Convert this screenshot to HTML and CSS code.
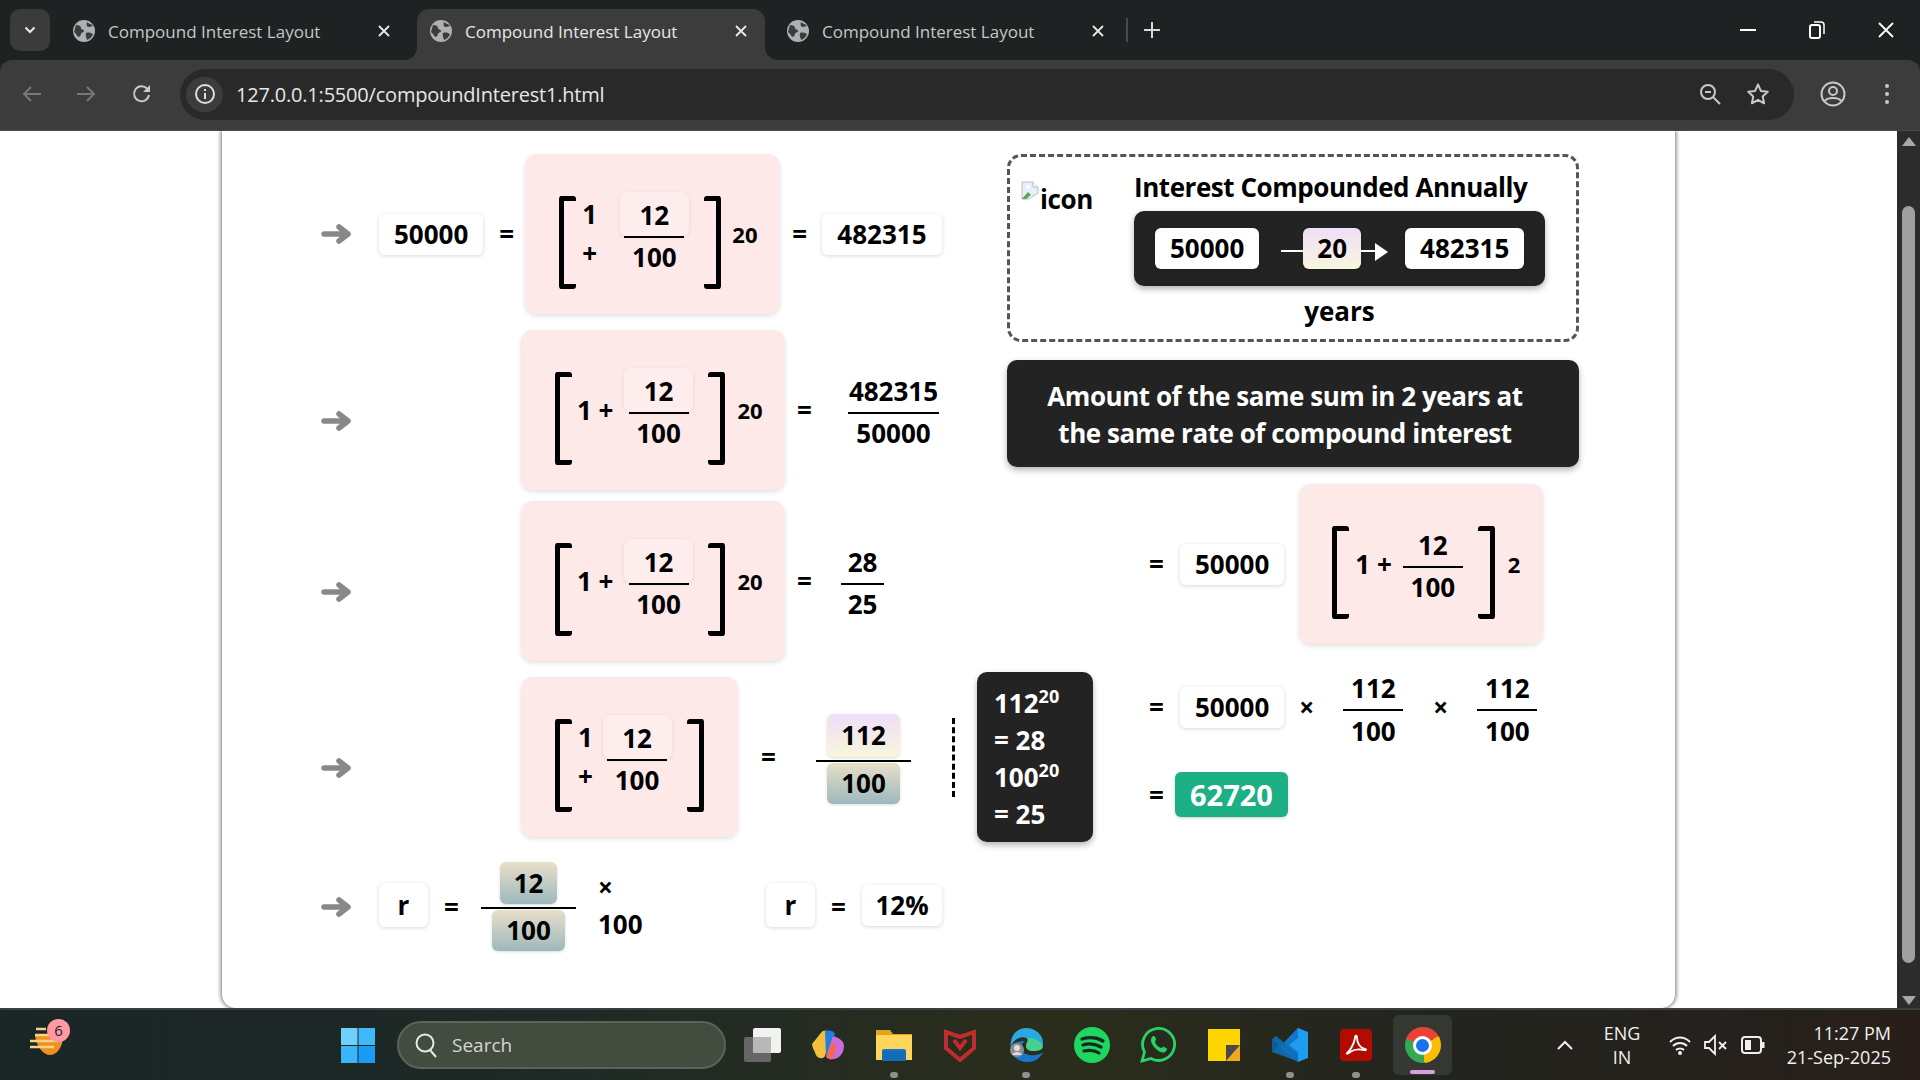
FILE: index.html
```html
<!DOCTYPE html>
<html lang="en">

<head>
    <meta charset="UTF-8">
    <meta name="viewport" content="width=device-width, initial-scale=1.0">
    <title>Compound Interest Layout</title>
    <link rel="stylesheet" href="styles.css">
</head>

<body>
    <svg class="defs" width="0" height="0">
        <symbol id="globe" viewBox="0 0 22 22">
            <circle cx="11" cy="11" r="11" fill="#aeb0b3"/>
            <path d="M3 5c3 0 5 1 5 3s3 1 3 3-3 1-3 3-2 3-3 3c-1-2-2-3-4-5zM14 2c1 2 4 1 6 4l-4 1c-2 0-3-2-2-5zM13 13c3-1 5 0 7 1-1 3-3 5-6 6 0-2-2-4-1-7z" fill="#3c3c3c"/>
        </symbol>
        <symbol id="close" viewBox="0 0 14 14">
            <path d="M2 2l10 10M12 2L2 12" stroke="currentColor" stroke-width="1.8" fill="none"/>
        </symbol>
        <symbol id="arrow" viewBox="0 0 31 20">
            <path d="M3 10H27M18 3l9 7-9 7" stroke="#888" stroke-width="5.500" stroke-linecap="round" stroke-linejoin="round" fill="none"/>
        </symbol>
    </svg>

    <!-- tabs -->
    <div class="tabstrip">
        <div class="tab-menu">
            <svg width="12" height="8" viewBox="0 0 12 8"><path d="M1.500 1.500L6 6l4.500-4.500" stroke="#e8e8e8" stroke-width="2" fill="none"/></svg>
        </div>
        <div class="tab">
            <svg class="tab-globe"><use href="#globe"/></svg>
            <span class="tab-title">Compound Interest Layout</span>
            <svg class="tab-close"><use href="#close"/></svg>
        </div>
        <div class="tab tab-active">
            <svg class="tab-globe"><use href="#globe"/></svg>
            <span class="tab-title">Compound Interest Layout</span>
            <svg class="tab-close"><use href="#close"/></svg>
        </div>
        <div class="tab">
            <svg class="tab-globe"><use href="#globe"/></svg>
            <span class="tab-title">Compound Interest Layout</span>
            <svg class="tab-close"><use href="#close"/></svg>
        </div>
        <div class="tab-sep"></div>
        <svg class="tab-plus" width="18" height="18" viewBox="0 0 18 18"><path d="M9 1v16M1 9h16" stroke="#d8d8d8" stroke-width="2"/></svg>
        <div class="win-controls">
            <div class="win-btn"><svg width="16" height="2" viewBox="0 0 16 2"><path d="M0 1h16" stroke="#fff" stroke-width="2"/></svg></div>
            <div class="win-btn"><svg width="16" height="18" viewBox="0 0 16 18"><rect x="1" y="4" width="10" height="13" rx="2" stroke="#fff" stroke-width="2" fill="none"/><path d="M5 1h7a3 3 0 0 1 3 3v9" stroke="#fff" stroke-width="1.500" fill="none"/></svg></div>
            <div class="win-btn"><svg width="16" height="16" viewBox="0 0 16 16"><path d="M1 1l14 14M15 1L1 15" stroke="#fff" stroke-width="1.800"/></svg></div>
        </div>
    </div>

    <!-- toolbar -->
    <div class="toolbar">
        <div class="tool-btn"><svg width="20" height="20" viewBox="0 0 20 20"><path d="M19 10H2M9 3l-7 7 7 7" stroke="#777" stroke-width="2" fill="none"/></svg></div>
        <div class="tool-btn"><svg width="20" height="20" viewBox="0 0 20 20"><path d="M1 10h17M11 3l7 7-7 7" stroke="#777" stroke-width="2" fill="none"/></svg></div>
        <div class="tool-btn tool-reload"><svg width="22" height="22" viewBox="0 0 22 22"><path d="M18 12a7.500 7.500 0 1 1-2-6.500L18 8" stroke="#c8c8c8" stroke-width="2" fill="none"/><path d="M19 2v7h-7z" fill="#c8c8c8"/></svg></div>
        <div class="omnibox">
            <div class="site-chip"><svg width="22" height="22" viewBox="0 0 22 22"><circle cx="11" cy="11" r="9" stroke="#e0e0e0" stroke-width="2" fill="none"/><path d="M11 10v6M11 6v2" stroke="#e0e0e0" stroke-width="2"/></svg></div>
            <span class="url">127.0.0.1:5500/compoundInterest1.html</span>
            <div class="omni-icons">
                <svg width="24" height="24" viewBox="0 0 24 24"><circle cx="10" cy="10" r="7" stroke="#c8c8c8" stroke-width="2" fill="none"/><path d="M15 15l7 7M7 10h6" stroke="#c8c8c8" stroke-width="2"/></svg>
                <svg width="24" height="24" viewBox="0 0 24 24"><path d="M12 2.500l2.900 6.400 6.900.8-5.100 4.700 1.400 6.900-6.100-3.500-6.100 3.500 1.400-6.900-5.100-4.700 6.900-.8z" stroke="#c8c8c8" stroke-width="2" stroke-linejoin="round" fill="none"/></svg>
            </div>
        </div>
        <div class="tool-btn tool-profile"><svg width="26" height="26" viewBox="0 0 26 26"><circle cx="13" cy="13" r="11.500" stroke="#c8c8c8" stroke-width="2" fill="none"/><circle cx="13" cy="10" r="4" stroke="#c8c8c8" stroke-width="2" fill="none"/><path d="M5 20c2-4 14-4 16 0" stroke="#c8c8c8" stroke-width="2" fill="none"/></svg></div>
        <div class="tool-btn"><svg width="4" height="20" viewBox="0 0 4 20"><circle cx="2" cy="2" r="2" fill="#c8c8c8"/><circle cx="2" cy="10" r="2" fill="#c8c8c8"/><circle cx="2" cy="18" r="2" fill="#c8c8c8"/></svg></div>
    </div>

    <!-- page -->
    <div class="viewport">
        <div class="page">
            <div class="card">
                <div class="col-left">

                    <div class="row row-1">
                        <svg class="arrow"><use href="#arrow"/></svg>
                        <div class="box ml-29">50000</div>
                        <div class="eq ml-16">=</div>
                        <div class="pink pink-a ml-12">
                            <div class="bracket"></div>
                            <div class="one-plus one-wrap">1 +</div>
                            <div class="frac ml-18">
                                <div class="num num-box">12</div>
                                <div class="frac-line"></div>
                                <div class="den">100</div>
                            </div>
                            <div class="bracket bracket-r ml-20"></div>
                            <div class="exp ml-11">20</div>
                        </div>
                        <div class="eq ml-12">=</div>
                        <div class="box ml-16">482315</div>
                    </div>

                    <div class="row row-2">
                        <svg class="arrow arrow-low"><use href="#arrow"/></svg>
                        <div class="pink pink-b ml-171">
                            <div class="bracket"></div>
                            <div class="one-plus one-tight">1 +</div>
                            <div class="frac ml-15">
                                <div class="num num-box">12</div>
                                <div class="frac-line"></div>
                                <div class="den">100</div>
                            </div>
                            <div class="bracket bracket-r ml-19"></div>
                            <div class="exp ml-13">20</div>
                        </div>
                        <div class="eq ml-12">=</div>
                        <div class="frac frac-wide ml-37">
                            <div class="num">482315</div>
                            <div class="frac-line"></div>
                            <div class="den">50000</div>
                        </div>
                    </div>

                    <div class="row row-3">
                        <svg class="arrow arrow-low"><use href="#arrow"/></svg>
                        <div class="pink pink-b ml-171">
                            <div class="bracket"></div>
                            <div class="one-plus one-tight">1 +</div>
                            <div class="frac ml-15">
                                <div class="num num-box">12</div>
                                <div class="frac-line"></div>
                                <div class="den">100</div>
                            </div>
                            <div class="bracket bracket-r ml-19"></div>
                            <div class="exp ml-13">20</div>
                        </div>
                        <div class="eq ml-12">=</div>
                        <div class="frac frac-small ml-30">
                            <div class="num">28</div>
                            <div class="frac-line"></div>
                            <div class="den">25</div>
                        </div>
                    </div>

                    <div class="row row-4">
                        <svg class="arrow arrow-low"><use href="#arrow"/></svg>
                        <div class="pink pink-c ml-171">
                            <div class="bracket"></div>
                            <div class="one-plus one-wrap">1 +</div>
                            <div class="frac ml-5">
                                <div class="num num-box">12</div>
                                <div class="frac-line"></div>
                                <div class="den">100</div>
                            </div>
                            <div class="bracket bracket-r ml-20"></div>
                        </div>
                        <div class="eq ml-23">=</div>
                        <div class="frac frac-grad frac-low ml-41">
                            <div class="grad grad-light">112</div>
                            <div class="frac-line"></div>
                            <div class="grad grad-dark">100</div>
                        </div>
                        <div class="dash-line"></div>
                        <div class="dark-note">
                            <div>112<sup>20</sup></div>
                            <div>= 28</div>
                            <div>100<sup>20</sup></div>
                            <div>= 25</div>
                        </div>
                    </div>

                    <div class="row row-5">
                        <svg class="arrow"><use href="#arrow"/></svg>
                        <div class="box box-tall box-r ml-29">r</div>
                        <div class="eq ml-16">=</div>
                        <div class="frac frac-grad ml-23">
                            <div class="grad grad-dark grad-num">12</div>
                            <div class="frac-line"></div>
                            <div class="grad grad-dark">100</div>
                        </div>
                        <div class="times-wrap">× 100</div>
                        <div class="box box-tall box-r ml-118">r</div>
                        <div class="eq ml-16">=</div>
                        <div class="box box-pct ml-17">12%</div>
                    </div>

                </div>

                <div class="col-right">
                    <div class="dashed">
                        <div class="icon-alt">
                            <svg width="19" height="19" viewBox="0 0 19 19"><path d="M1 1h11l5 5v6L8 18H1z" fill="#e8eefc" stroke="#b9bcc4"/><path d="M12 1v5h5" fill="#fff" stroke="#b9bcc4"/><path d="M1 18l6-7 3 3-5 4z" fill="#57a845"/><circle cx="7" cy="6" r="2" fill="#fff"/></svg><span>icon</span>
                        </div>
                        <div class="dashed-main">
                            <div class="dashed-title">Interest Compounded Annually</div>
                            <div class="flow">
                                <div class="box">50000</div>
                                <div class="seg seg-a"></div>
                                <div class="box box-years">20</div>
                                <div class="seg seg-b"></div>
                                <div class="tri"></div>
                                <div class="box ml-17">482315</div>
                            </div>
                            <div class="years">years</div>
                        </div>
                    </div>

                    <div class="banner">Amount of the same sum in 2 years at<br>the same rate of compound interest</div>

                    <div class="row row-a">
                        <div class="eq ml-142">=</div>
                        <div class="box ml-17">50000</div>
                        <div class="pink pink-d ml-15">
                            <div class="bracket"></div>
                            <div class="one-plus">1 +</div>
                            <div class="frac ml-11">
                                <div class="num">12</div>
                                <div class="frac-line"></div>
                                <div class="den">100</div>
                            </div>
                            <div class="bracket bracket-r ml-15"></div>
                            <div class="exp ml-13">2</div>
                        </div>
                    </div>

                    <div class="row row-b">
                        <div class="eq ml-142">=</div>
                        <div class="box ml-17">50000</div>
                        <div class="times ml-15">×</div>
                        <div class="frac ml-30">
                            <div class="num">112</div>
                            <div class="frac-line"></div>
                            <div class="den">100</div>
                        </div>
                        <div class="times ml-30">×</div>
                        <div class="frac ml-30">
                            <div class="num">112</div>
                            <div class="frac-line"></div>
                            <div class="den">100</div>
                        </div>
                    </div>

                    <div class="row row-c">
                        <div class="eq ml-142">=</div>
                        <div class="answer">62720</div>
                    </div>
                </div>
            </div>
        </div>

        <div class="scrollbar">
            <div class="scroll-up"></div>
            <div class="scroll-thumb"></div>
            <div class="scroll-down"></div>
        </div>
    </div>

    <!-- taskbar -->
    <div class="taskbar">
        <div class="widget">
            <svg width="36" height="32" viewBox="0 0 36 32"><path d="M6 12h28c0 12-7 19-13 19S8 24 6 12z" fill="#f0901e"/><path d="M1 17h28M1 23h24M6 11h26M7 5h10" stroke="#f3d58a" stroke-width="2.500"/></svg>
            <span class="badge">6</span>
        </div>
        <div class="task-slot task-first">
            <svg width="34" height="35" viewBox="0 0 34 35"><rect width="16.500" height="17" fill="#6fd0fb"/><rect x="17.500" width="16.500" height="17" fill="#3fbaf9"/><rect y="18" width="16.500" height="17" fill="#3cb4f8"/><rect x="17.500" y="18" width="16.500" height="17" fill="#1a9cf5"/></svg>
        </div>
        <div class="search">
            <svg width="24" height="26" viewBox="0 0 24 26"><circle cx="11" cy="11" r="8.500" stroke="#e8e8e8" stroke-width="2" fill="none"/><path d="M16 18l6 7" stroke="#e8e8e8" stroke-width="2"/></svg>
            <span>Search</span>
        </div>
        <div class="task-slot">
            <svg width="37" height="34" viewBox="0 0 37 34"><rect y="9" width="27" height="25" rx="2" fill="#666"/><rect x="9" width="28" height="25" rx="2" fill="#f2f2f2"/><rect x="9" y="9" width="18" height="16" fill="#b8b8b8"/></svg>
        </div>
        <div class="task-slot">
            <svg width="34" height="30" viewBox="0 0 34 30"><path d="M9 4c2-4 6-4 8-3l4 1-7 24c-2 4-8 2-9-1C3 20 1 17 1 14z" fill="#ffc83d" opacity=".95"/><path d="M14 1c3-1 9-1 10 3l-9 22z" fill="#1f7fe0"/><path d="M22 6c4 1 11 4 11 10 0 8-6 13-10 13-3 1-6 0-8-2z" fill="#c86de0"/><path d="M15 27l5-15 6 3-4 14z" fill="#f2695c"/></svg>
        </div>
        <div class="task-slot">
            <svg width="36" height="32" viewBox="0 0 36 32"><path d="M0 1h14l3 4h19v26H0z" fill="#e0a51c"/><path d="M0 6h36v25H0z" fill="#ffd65c"/><rect x="6" y="20" width="24" height="12" rx="2" fill="#1a78c8"/><rect x="6" y="22" width="24" height="10" fill="#0f64b0" opacity=".6"/></svg>
            <span class="task-dot"></span>
        </div>
        <div class="task-slot">
            <svg width="32" height="34" viewBox="0 0 32 34"><path d="M2 4l14 5 14-5v16L16 32 2 20z" stroke="#c12c2c" stroke-width="4" fill="none"/><path d="M10 12l6 8 6-8" stroke="#c12c2c" stroke-width="4" fill="none"/></svg>
        </div>
        <div class="task-slot">
            <svg width="36" height="36" viewBox="0 0 36 36"><path d="M18 1c10 0 17 7 17 15 0 5-4 8-9 8-5 0-8-2-8-5 0-2 2-2 2-5s-4-5-9-3C6 13 3 17 3 22 1 10 8 1 18 1z" fill="#2aa8e0"/><path d="M3 22c1 8 8 13 16 13 7 0 13-3 16-10-5 4-12 4-17 2-6-2-6-9-1-13-8 0-14 2-14 8z" fill="#1877c9"/><path d="M20 11c6 0 14 3 15 9-1 3-5 4-9 4-5 0-8-2-8-5 0-3 2-5 2-8z" fill="#47d18c"/><circle cx="9" cy="23" r="7" fill="#8d8d8d"/><circle cx="9" cy="21" r="3" fill="#ddd"/><path d="M4 28c2-4 8-4 10 0z" fill="#ddd"/></svg>
            <span class="task-dot"></span>
        </div>
        <div class="task-slot">
            <svg width="36" height="36" viewBox="0 0 36 36"><circle cx="18" cy="18" r="18" fill="#1ed760"/><path d="M8 12c7-2 14-2 21 2M9 18c6-2 12-1 18 2M10 24c5-1 10-1 15 2" stroke="#16291d" stroke-width="3.200" stroke-linecap="round" fill="none"/></svg>
        </div>
        <div class="task-slot">
            <svg width="36" height="36" viewBox="0 0 36 36"><path d="M2 34l2.500-9A16 16 0 1 1 11 31.500z" stroke="#25d366" stroke-width="2.800" fill="none"/><path d="M12 10c2-2 3-1 4 2 .5 1-1 2-1 3 1 3 3 5 6 6 1 0 2-2 3-1 3 1 4 2 2 4-2 3-7 1-10-2s-7-8-4-12z" fill="#25d366"/></svg>
        </div>
        <div class="task-slot">
            <svg width="32" height="32" viewBox="0 0 32 32"><path d="M0 0h32v32H0z" fill="#ffd500"/><path d="M18 32l14-16v16z" fill="#f0a81c"/><path d="M18 32V16h14z" fill="#4a4a4a"/></svg>
        </div>
        <div class="task-slot">
            <svg width="36" height="36" viewBox="0 0 36 36"><path d="M26 1l10 4v26l-10 4L8 20z" fill="#1f9cf0"/><path d="M26 1L10 18l16 17V25L17 18l9-7z" fill="#0f78c8"/><path d="M0 12l4-3 22 18v8l-4-2L0 25l5-7z" fill="#0e6fb8" opacity=".9"/><path d="M0 25V12l7 6z" fill="#0a5c9c"/></svg>
            <span class="task-dot"></span>
        </div>
        <div class="task-slot">
            <svg width="32" height="32" viewBox="0 0 32 32"><rect width="32" height="32" rx="4" fill="#b30b00"/><path d="M7 24c3-2 7-9 8-15 0-3 2-3 2 0 0 5 3 10 8 11 2 0 1 2-1 1-5-1-11 0-14 2-2 2-4 2-3 1z" stroke="#fff" stroke-width="1.800" fill="none"/></svg>
            <span class="task-dot"></span>
        </div>
        <div class="task-slot task-active">
            <div class="chrome-logo"><span></span></div>
            <span class="task-indicator"></span>
        </div>

        <div class="tray">
            <svg class="tray-chev" width="16" height="10" viewBox="0 0 16 10"><path d="M1 9l7-7 7 7" stroke="#f0f0f0" stroke-width="2" fill="none"/></svg>
            <div class="lang">ENG<br>IN</div>
            <svg class="tray-wifi" width="24" height="22" viewBox="0 0 24 22"><path d="M2 8c6-6 14-6 20 0M5 12c4-4 10-4 14 0M8 16c2-2 6-2 8 0" stroke="#f0f0f0" stroke-width="2" fill="none"/><circle cx="12" cy="19" r="2" fill="#f0f0f0"/></svg>
            <svg class="tray-sound" width="24" height="22" viewBox="0 0 24 22"><path d="M1 8h4l6-6v18l-6-6H1z" stroke="#f0f0f0" stroke-width="1.800" fill="none"/><path d="M15 8l7 7M22 8l-7 7" stroke="#f0f0f0" stroke-width="1.800"/></svg>
            <svg class="tray-batt" width="24" height="20" viewBox="0 0 24 20"><rect x="1" y="2" width="19" height="16" rx="3" stroke="#f0f0f0" stroke-width="2" fill="none"/><rect x="4" y="5" width="6" height="10" fill="#f0f0f0"/><rect x="21" y="7" width="2.500" height="6" fill="#f0f0f0"/></svg>
            <div class="clock">11:27 PM<br>21-Sep-2025</div>
        </div>
    </div>
</body>

</html>
```

FILE: styles.css
```css
* {
    box-sizing: border-box;
}

html,
body {
    margin: 0;
    height: 1080px;
    overflow: hidden;
}

body {
    font-family: "Open Sans", "Liberation Sans", sans-serif;
    background-color: #1f2222;
}

.defs {
    display: block;
    height: 0;
}

/* tabs */
.tabstrip {
    display: flex;
    align-items: flex-end;
    height: 60px;
    padding-left: 10px;
    background-color: #1f2222;
}

.tab-menu {
    display: flex;
    align-items: center;
    justify-content: center;
    width: 40px;
    height: 42px;
    margin-bottom: 9px;
    border-radius: 10px;
    background-color: #3b3b3b;
}

.tab {
    position: relative;
    display: flex;
    align-items: center;
    width: 348px;
    height: 51px;
    margin-left: 10px;
    padding: 0 14px 7px 13px;
    border-radius: 12px 12px 0 0;
    color: #c6c6c6;
}

.tab + .tab {
    margin-left: 9px;
}

.tab-active {
    background-color: #3c3c3c;
    color: #e6e6e6;
}

.tab-active::before,
.tab-active::after {
    content: "";
    position: absolute;
    bottom: 0;
    width: 12px;
    height: 12px;
}

.tab-active::before {
    left: -12px;
    background: radial-gradient(circle at 0 0, transparent 11.500px, #3c3c3c 12px);
}

.tab-active::after {
    right: -12px;
    background: radial-gradient(circle at 100% 0, transparent 11.500px, #3c3c3c 12px);
}

.tab-globe {
    width: 22px;
    height: 22px;
    flex-shrink: 0;
}

.tab-title {
    flex: 1;
    margin-left: 13px;
    font-size: 17px;
    white-space: nowrap;
}

.tab-close {
    width: 14px;
    height: 14px;
    margin-right: 3px;
    color: #e8e8e8;
}

.tab-sep {
    width: 2px;
    height: 24px;
    margin: 0 0 18px 4px;
    background-color: #4a4a4a;
}

.tab-plus {
    margin: 0 0 21px 15px;
}

.win-controls {
    display: flex;
    margin-left: auto;
    height: 60px;
}

.win-btn {
    display: flex;
    align-items: center;
    justify-content: center;
    width: 69px;
}

/* toolbar */
.toolbar {
    display: flex;
    align-items: center;
    height: 71px;
    padding: 0 0 2px 5px;
    border-radius: 12px 12px 0 0;
    border-bottom: 1px solid #4c4c4c;
    background-color: #3c3c3c;
}

.tool-btn {
    display: flex;
    align-items: center;
    justify-content: center;
    width: 54px;
    height: 40px;
}

.tool-reload {
    margin-left: 2px;
}

.omnibox {
    display: flex;
    align-items: center;
    width: 1614px;
    height: 51px;
    margin-left: 11px;
    padding-left: 6px;
    border-radius: 26px;
    background-color: #292929;
}

.site-chip {
    display: flex;
    align-items: center;
    justify-content: center;
    width: 37px;
    height: 35px;
    border-radius: 18px;
    background-color: #3c3c3c;
}

.url {
    margin-left: 13px;
    font-size: 20px;
    letter-spacing: -0.2px;
    color: #e6e6e6;
}

.omni-icons {
    display: flex;
    gap: 24px;
    margin-left: auto;
    margin-right: 24px;
}

.tool-profile {
    margin-left: 12px;
}

/* page */
.viewport {
    display: flex;
    height: 877px;
}

.page {
    flex: 1;
    padding-left: 222px;
    overflow: hidden;
    background-color: #fff;
}

.card {
    display: flex;
    width: 1453px;
    height: 877px;
    padding: 23px 0 0 99px;
    border-radius: 0 0 14px 14px;
    background-color: #fff;
    box-shadow: 0 0 4px 1px rgba(0, 0, 0, 0.55);
    font-size: 26px;
    font-weight: 700;
    color: #000;
}

.col-left {
    width: 686px;
    flex-shrink: 0;
}

.col-right {
    width: 572px;
    flex-shrink: 0;
}

.row {
    display: flex;
    align-items: center;
}

.row > * {
    flex-shrink: 0;
}

.row-1 {
    height: 160px;
}

.row-2 {
    height: 160px;
    margin-top: 16px;
}

.row-3 {
    height: 160px;
    margin-top: 11px;
}

.row-4 {
    height: 170px;
    margin-top: 11px;
}

.row-5 {
    height: 89px;
    margin-top: 20px;
}

.row-a {
    height: 160px;
    margin-top: 17px;
}

.row-b {
    height: 84px;
    margin-top: 21px;
}

.row-b .den {
    line-height: 40px;
}

.row-c {
    height: 45px;
    margin-top: 23px;
}

.ml-5 { margin-left: 5px; }
.ml-11 { margin-left: 11px; }
.ml-12 { margin-left: 12px; }
.ml-13 { margin-left: 13px; }
.ml-15 { margin-left: 15px; }
.ml-16 { margin-left: 16px; }
.ml-17 { margin-left: 17px; }
.ml-18 { margin-left: 18px; }
.ml-19 { margin-left: 19px; }
.ml-20 { margin-left: 20px; }
.ml-23 { margin-left: 23px; }
.ml-29 { margin-left: 29px; }
.ml-30 { margin-left: 30px; }
.ml-37 { margin-left: 37px; }
.ml-41 { margin-left: 41px; }
.ml-118 { margin-left: 118px; }
.ml-142 { margin-left: 142px; }
.ml-171 { margin-left: 171px; }

.arrow {
    width: 31px;
    height: 20px;
    margin-right: -2px;
}

.arrow-low {
    margin-top: 22px;
}

.box {
    height: 41px;
    padding: 0 15px;
    border-radius: 6px;
    background-color: #fff;
    box-shadow: 0 1px 4px rgba(0, 0, 0, 0.16);
    line-height: 41px;
    white-space: nowrap;
}

.box-tall {
    height: 44px;
    margin-top: -3px;
    line-height: 44px;
}

.box-r {
    width: 49px;
    padding: 0;
    text-align: center;
}

.box-pct {
    width: 80px;
    padding: 0;
    margin-top: -2px;
    text-align: center;
}

.eq {
    width: 14px;
    text-align: center;
}

.times {
    width: 14px;
    text-align: center;
}

.pink {
    display: flex;
    align-items: center;
    height: 160px;
    padding-left: 34px;
    border-radius: 12px;
    background-color: #fde9e8;
    box-shadow: 0 2px 5px rgba(0, 0, 0, 0.12);
}

.pink-a {
    width: 255px;
}

.pink-b {
    width: 264px;
}

.pink-c {
    width: 217px;
}

.pink-d {
    width: 244px;
    padding-left: 33px;
}

.bracket {
    width: 17px;
    height: 93px;
    margin-top: 16px;
    flex-shrink: 0;
    border: 5px solid #000;
    border-right: none;
    border-radius: 3px;
}

.bracket-r {
    border: 5px solid #000;
    border-left: none;
}

.one-plus {
    margin-left: 6px;
    white-space: nowrap;
}

.one-tight {
    margin-left: 5px;
}

.one-wrap {
    width: 24px;
    white-space: normal;
    line-height: 39px;
}

.exp {
    font-size: 22px;
}

.frac {
    display: flex;
    flex-direction: column;
    align-items: center;
    flex-shrink: 0;
    width: 60px;
}

.frac-wide {
    width: 91px;
}

.frac-small {
    width: 43px;
}

.frac-grad {
    width: 95px;
}

.frac-low {
    margin-top: 3px;
}

.frac-line {
    width: 100%;
    height: 2px;
    flex-shrink: 0;
    background-color: #000;
}

.num {
    height: 44px;
    line-height: 46px;
    white-space: nowrap;
}

.num-box {
    width: 69px;
    margin: 0 -5px;
    border-radius: 7px;
    background-color: #fdeeed;
    box-shadow: 0 1px 4px rgba(0, 0, 0, 0.08);
    text-align: center;
}

.den {
    height: 38px;
    line-height: 38px;
    white-space: nowrap;
}

.grad {
    height: 41px;
    padding: 0 14px;
    border-radius: 6px;
    box-shadow: 0 1px 3px rgba(0, 0, 0, 0.15);
    line-height: 41px;
}

.grad-light {
    height: 43px;
    line-height: 43px;
    margin-bottom: 3px;
    background: linear-gradient(#f0def8, #f7f6dc);
}

.grad-dark {
    margin-top: 1px;
    background: linear-gradient(#e8dfc9, #9db8bd);
}

.grad-num {
    height: 42px;
    margin: 0 0 3px;
    line-height: 42px;
}

.dash-line {
    width: 3px;
    height: 79px;
    margin-left: 41px;
    border-left: 3px dashed #000;
}

.dark-note {
    width: 116px;
    height: 170px;
    margin-left: 22px;
    padding: 13px 0 0 17px;
    border-radius: 10px;
    background-color: #232323;
    box-shadow: 0 3px 6px rgba(0, 0, 0, 0.3);
    color: #fff;
    line-height: 37px;
}

.dark-note sup {
    font-size: 18px;
    line-height: 0;
}

.times-wrap {
    width: 50px;
    margin: -1px 0 0 22px;
    line-height: 37px;
}

/* right column */
.dashed {
    display: flex;
    height: 188px;
    padding: 12px 0 0 11px;
    border: 3px dashed #555;
    border-radius: 14px;
}

.icon-alt {
    display: flex;
    align-items: flex-start;
    width: 113px;
    padding-top: 12px;
    letter-spacing: -0.4px;
}

.icon-alt span {
    line-height: 36px;
}

.dashed-main {
    width: 411px;
}

.dashed-title {
    line-height: 36px;
    letter-spacing: -0.45px;
    white-space: nowrap;
}

.flow {
    display: flex;
    align-items: center;
    height: 75px;
    margin-top: 6px;
    padding-left: 21px;
    border-radius: 10px;
    background-color: #232323;
    box-shadow: 0 3px 6px rgba(0, 0, 0, 0.3);
}

.box-years {
    padding: 0 14px;
    background: linear-gradient(#f0def8, #f7f6dc);
}

.seg {
    height: 2px;
    margin-top: 5px;
    background-color: #fff;
}

.seg-a {
    width: 22px;
    margin-left: 22px;
}

.seg-b {
    width: 14px;
}

.tri {
    width: 0;
    height: 0;
    margin-top: 6px;
    border-left: 13px solid #fff;
    border-top: 9px solid transparent;
    border-bottom: 9px solid transparent;
}

.years {
    margin-top: 7px;
    line-height: 36px;
    text-align: center;
}

.banner {
    display: flex;
    align-items: center;
    justify-content: center;
    height: 107px;
    margin-top: 18px;
    padding: 2px 16px 0 0;
    border-radius: 10px;
    background-color: #232323;
    box-shadow: 0 3px 6px rgba(0, 0, 0, 0.3);
    color: #fff;
    line-height: 37px;
    letter-spacing: -0.45px;
    text-align: center;
}

.answer {
    width: 113px;
    height: 45px;
    margin-left: 12px;
    border-radius: 6px;
    background-color: #1db084;
    box-shadow: 0 1px 3px rgba(0, 0, 0, 0.2);
    color: #fff;
    font-size: 29px;
    line-height: 45px;
    text-align: center;
}

/* scrollbar */
.scrollbar {
    position: relative;
    width: 23px;
    background-color: #2c2c2c;
}

.scroll-thumb {
    position: absolute;
    left: 5px;
    top: 75px;
    width: 13px;
    height: 757px;
    border-radius: 7px;
    background-color: #9f9f9f;
}

.scroll-up,
.scroll-down {
    position: absolute;
    left: 5px;
    width: 0;
    height: 0;
    border-left: 7px solid transparent;
    border-right: 7px solid transparent;
}

.scroll-up {
    top: 6px;
    border-bottom: 9px solid #a8a8a8;
}

.scroll-down {
    bottom: 3px;
    border-top: 9px solid #a8a8a8;
}

/* taskbar */
.taskbar {
    display: flex;
    align-items: center;
    height: 72px;
    border-top: 2px solid #3a4040;
    background: linear-gradient(90deg, #1a2526 0%, #1f2a26 30%, #2b2d1c 55%, #22241f 75%, #281f1a 100%);
}

.widget {
    position: relative;
    width: 325px;
    height: 100%;
    padding: 14px 0 0 29px;
}

.badge {
    position: absolute;
    left: 47px;
    top: 9px;
    width: 23px;
    height: 23px;
    border-radius: 50%;
    background-color: #ff9aa2;
    color: #222;
    font-size: 15px;
    line-height: 23px;
    text-align: center;
}

.task-slot {
    position: relative;
    display: flex;
    align-items: center;
    justify-content: center;
    flex-shrink: 0;
    width: 66px;
    height: 60px;
}

.task-first {
    margin-right: 6px;
}

.task-dot {
    position: absolute;
    left: 29px;
    bottom: -3px;
    width: 8px;
    height: 6px;
    border-radius: 3px;
    background-color: #8f9090;
}

.task-active {
    width: 59px;
    margin: 0 3px 0 4px;
    border-radius: 6px;
    background-color: rgba(255, 255, 255, 0.09);
}

.task-indicator {
    position: absolute;
    left: 17px;
    bottom: 1px;
    width: 25px;
    height: 4px;
    border-radius: 2px;
    background-color: #d9a0e0;
}

.chrome-logo {
    display: flex;
    align-items: center;
    justify-content: center;
    width: 36px;
    height: 36px;
    border-radius: 50%;
    background: conic-gradient(from 290deg, #ea4335 0 130deg, #fbbc04 130deg 245deg, #34a853 245deg 360deg);
}

.chrome-logo span {
    width: 19px;
    height: 19px;
    border: 3px solid #fff;
    border-radius: 50%;
    background-color: #1a73e8;
}

.search {
    display: flex;
    align-items: center;
    width: 329px;
    height: 48px;
    margin-right: 3px;
    padding-left: 15px;
    border: 2px solid #5a645a;
    border-radius: 24px;
    background-color: #424c3f;
    color: #d6d6d6;
    font-size: 19px;
}

.search span {
    margin-left: 14px;
}

.tray {
    display: flex;
    align-items: center;
    flex: 1;
    height: 100%;
    color: #f0f0f0;
    font-size: 18px;
    line-height: 24px;
}

.tray-chev {
    margin-left: 102px;
}

.lang {
    width: 56px;
    margin-left: 21px;
    text-align: center;
}

.tray-wifi {
    margin-left: 18px;
}

.tray-sound {
    margin-left: 12px;
}

.tray-batt {
    margin-left: 13px;
}

.clock {
    margin-left: auto;
    margin-right: 29px;
    text-align: right;
}
```
